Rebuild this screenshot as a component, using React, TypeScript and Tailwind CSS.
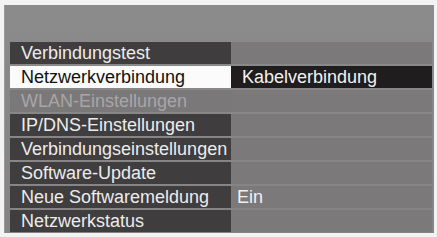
const rows: { label: string; value?: string; state?: "selected" | "disabled" }[] = [
  { label: "Verbindungstest" },
  { label: "Netzwerkverbindung", value: "Kabelverbindung", state: "selected" },
  { label: "WLAN-Einstellungen", state: "disabled" },
  { label: "IP/DNS-Einstellungen" },
  { label: "Verbindungseinstellungen" },
  { label: "Software-Update" },
  { label: "Neue Softwaremeldung", value: "Ein" },
  { label: "Netzwerkstatus" },
];

export default function App() {
  return (
    <div
      className="w-[437px] h-[237px] bg-[#f3f3f3] pt-[5px] pl-[4px]"
      style={{ fontFamily: '"Liberation Sans", Arial, sans-serif' }}
    >
      <div className="w-[430px] h-[228px] bg-gradient-to-b from-[#8b8b8b] to-[#858384] border-l border-[#9a9a9a] pt-[37px] pl-[5px] pr-[2px] flex flex-col gap-[2px]">
        {rows.map((row) => {
          const selected = row.state === "selected";
          const disabled = row.state === "disabled";
          return (
            <div key={row.label} className="flex h-[22px]">
              <div
                className={`w-[221px] shrink-0 overflow-hidden whitespace-nowrap pl-[11px] text-[18px] leading-[22px] ${
                  selected
                    ? "bg-[#fbfbfb] text-[#111]"
                    : disabled
                    ? "bg-[#7a7879] text-[#a8a6a7]"
                    : "bg-[#3f3d3e] text-[#ececec]"
                }`}
              >
                {row.label}
              </div>
              <div
                className={`flex-1 whitespace-nowrap text-[18px] leading-[22px] ${
                  selected ? "bg-[#1f1d1e] text-[#f2f2f2] pl-[11px]" : "bg-[#7b797a] text-[#f0f0f0] pl-[6px]"
                }`}
              >
                {row.value}
              </div>
            </div>
          );
        })}
      </div>
    </div>
  );
}
